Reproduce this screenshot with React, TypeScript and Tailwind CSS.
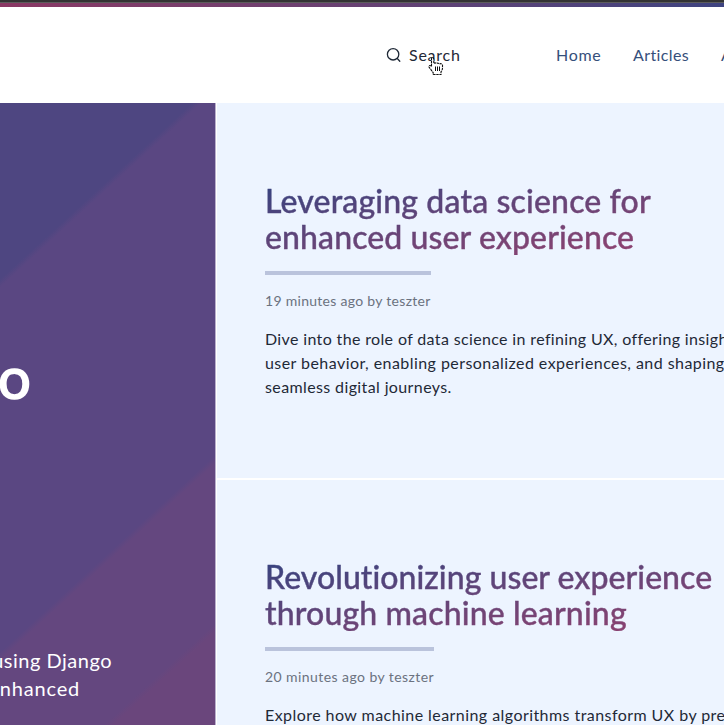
import React from "react";

function Cursor() {
  return (
    <svg className="absolute left-[19px] top-[14px]" width="16" height="19" viewBox="0 0 16 19">
      <path
        d="M3.5 2 Q3.5 .8 4.5 .8 T5.8 2 V6.5 Q7.2 5.2 8.4 6.5 Q10 5.5 11.4 7 Q13 6 14.5 8 V11 Q14.5 13 13 14.8 V17.5 H5.2 V15.7 L1 10 Q.4 7.8 3.5 9 Z"
        fill="#fff"
      />
      <path
        d="M3.5 9.5 V2 Q3.5 .8 4.5 .8 T5.8 2 V6.5 Q7.2 5.2 8.4 6.5 Q10 5.5 11.4 7 Q13 6 14.5 8 V11 Q14.5 13 13 14.8 V17.5 H5.2 V15.7 L1 10 Q.4 7.8 3.5 9"
        fill="none"
        stroke="#111"
        strokeWidth="1.1"
        strokeDasharray="2.4 .7"
      />
      <path d="M7.5 9.5v4.5M9.5 9.5v4.5M11.5 9.5v4.5" stroke="#111" />
    </svg>
  );
}

type Line = { text: string; tracking: string };
type Post = { title: Line[]; meta: Line; body: Line[]; gap: string };

const posts: Post[] = [
  {
    title: [
      { text: "Leveraging data science for", tracking: "tracking-[0.15px]" },
      { text: "enhanced user experience", tracking: "tracking-[0.1px]" },
    ],
    meta: { text: "19 minutes ago by teszter", tracking: "tracking-[0.29px]" },
    body: [
      { text: "Dive into the role of data science in refining UX, offering insights into", tracking: "tracking-[0.36px]" },
      { text: "user behavior, enabling personalized experiences, and shaping", tracking: "tracking-[0.44px]" },
      { text: "seamless digital journeys.", tracking: "tracking-[0.38px]" },
    ],
    gap: "h-[377px] border-b-2 border-white pt-20",
  },
  {
    title: [
      { text: "Revolutionizing user experience", tracking: "tracking-[0.04px]" },
      { text: "through machine learning", tracking: "tracking-[0.14px]" },
    ],
    meta: { text: "20 minutes ago by teszter", tracking: "tracking-[0.43px]" },
    body: [{ text: "Explore how machine learning algorithms transform UX by predicting", tracking: "tracking-[0.44px]" }],
    gap: "h-[376px] pt-[79px]",
  },
];

function Article({ post }: { post: Post }) {
  return (
    <article className={`shrink-0 pl-12 ${post.gap}`}>
      <h2 className="w-fit bg-linear-to-br from-[#35427f] to-[#91406f] bg-clip-text text-[32px] font-medium leading-9 text-transparent [-webkit-text-stroke:0.4px_transparent] [font-variant-ligatures:none]">
        {post.title.map((l) => (
          <span key={l.text} className={`block w-fit whitespace-nowrap ${l.tracking}`}>{l.text}</span>
        ))}
      </h2>
      <div className="mt-4 w-fit border-t-4 border-[#bac3dc] pt-4">
        <p className={`whitespace-nowrap text-sm leading-5 text-[#6b7280] ${post.meta.tracking}`}>{post.meta.text}</p>
      </div>
      <div className="mt-4 text-base leading-6 text-[#1f2937]">
        {post.body.map((l) => (
          <span key={l.text} className={`block w-fit whitespace-nowrap ${l.tracking}`}>{l.text}</span>
        ))}
      </div>
    </article>
  );
}

export default function App() {
  return (
    <div className="flex h-[725px] w-[724px] flex-col overflow-hidden bg-white font-['Lato',sans-serif]">
      <div className="h-[3px] shrink-0 border-b border-[#5c5c5c] bg-[#333]" />
      <div className="h-1 shrink-0 bg-linear-to-r from-[#8b3864] to-[#3e4380]" />
      <header className="flex h-24 shrink-0 items-center pl-[386px] text-base text-[#364f7b]">
        <div className="flex w-[170px] shrink-0 items-center text-[#1f2937]">
          <svg width="16" height="16" viewBox="0 0 16 16" fill="none" stroke="currentColor" strokeWidth="1.3" strokeLinecap="round">
            <circle cx="7.1" cy="7.3" r="5.7" />
            <path d="m11.3 11.5 2.5 2.7" />
          </svg>
          <div className="relative ml-[7px]">
            <span className="tracking-[0.75px]">Search</span>
            <Cursor />
          </div>
        </div>
        <a className="w-[77px] shrink-0 tracking-[0.7px]">Home</a>
        <a className="w-[88px] shrink-0 tracking-[0.4px]">Articles</a>
        <a className="shrink-0">About</a>
      </header>
      <main className="flex min-h-0 flex-1">
        <section className="flex w-[216px] shrink-0 flex-col overflow-hidden border-r border-[#b9b0cd] bg-[linear-gradient(137.5deg,#4e4681_130px,#5a4782_136px,#5a4782_405px,#64477f_411px,#64477f_529px,#6a467c_535px)] text-white">
          <div className="flex h-[543px] w-full flex-col">
            <div className="mt-[238px] flex w-[31px] justify-end text-[58px] leading-[72px] [-webkit-text-stroke:1.6px_white]">Django</div>
          </div>
          <div className="text-xl leading-7">
            <div className="flex w-[112px] justify-end whitespace-nowrap tracking-[0.5px]">using Django</div>
            <div className="flex w-[80px] justify-end whitespace-nowrap tracking-[0.8px]">enhanced</div>
          </div>
        </section>
        <div className="flex min-w-0 flex-1 flex-col overflow-hidden border-l border-white bg-[#edf4ff]">
          {posts.map((p) => (
            <Article key={p.meta.text} post={p} />
          ))}
        </div>
      </main>
    </div>
  );
}
